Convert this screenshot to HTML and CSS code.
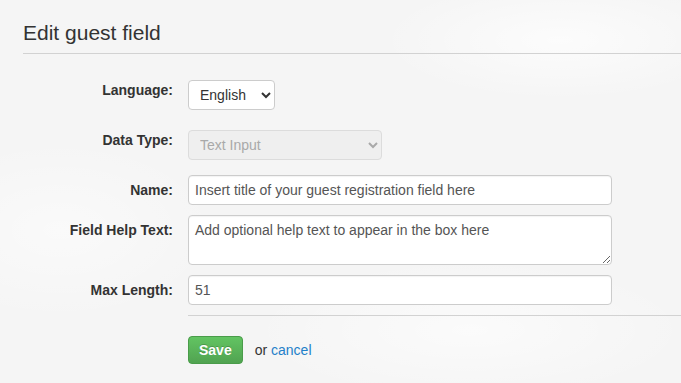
FILE: index.html
```html
<!DOCTYPE html>
<html lang="en">
<head>
    <meta charset="UTF-8">
    <meta name="viewport" content="width=device-width, initial-scale=1.0">
    <title>Edit guest field</title>
    <link rel="stylesheet" href="styles.css">
</head>
<body>

    <div id="page">
        <form id="fieldForm">
            <div class="legend">Edit guest field</div>

            <!-- FIELD ROWS -->
            <div class="row row-select row-wide">
                <label class="label" for="language">Language:</label>
                <div class="control">
                    <select id="language" class="language">
                        <option>English</option>
                    </select>
                </div>
            </div>

            <div class="row row-select row-mid">
                <label class="label" for="dataType">Data Type:</label>
                <div class="control">
                    <select id="dataType" class="data-type" disabled>
                        <option>Text Input</option>
                    </select>
                </div>
            </div>

            <div class="row">
                <label class="label" for="name">Name:</label>
                <div class="control">
                    <input type="text" id="name" class="text" value="Insert title of your guest registration field here">
                </div>
            </div>

            <div class="row">
                <label class="label" for="help">Field Help Text:</label>
                <div class="control">
                    <textarea id="help" class="text area">Add optional help text to appear in the box here</textarea>
                </div>
            </div>

            <div class="row">
                <label class="label" for="maxLength">Max Length:</label>
                <div class="control">
                    <input type="text" id="maxLength" class="text" value="51">
                </div>
            </div>

            <!-- ACTIONS -->
            <div class="actions">
                <button type="button" class="btn-save">Save</button>
                <span class="or">or <a href="#">cancel</a></span>
            </div>
        </form>
    </div>

</body>
</html>
```

FILE: styles.css
```css
* {
    box-sizing: border-box;
}

body {
    margin: 0;
    background-color: #f5f5f5;
    background-image:
        radial-gradient(ellipse 180px 60px at 560px 40px, rgba(255, 255, 255, 0.7), rgba(255, 255, 255, 0)),
        radial-gradient(ellipse 220px 70px at 470px 330px, rgba(255, 255, 255, 0.6), rgba(255, 255, 255, 0)),
        radial-gradient(ellipse 160px 90px at 60px 230px, rgba(255, 255, 255, 0.5), rgba(255, 255, 255, 0));
    font-family: "Liberation Sans", Arial, sans-serif;
    font-size: 14px;
    color: #333333;
    height: 383px;
    overflow: hidden;
}

#page {
    padding-left: 23px;
}

/* HEADER */
.legend {
    margin-top: 13px;
    margin-bottom: 26px;
    font-size: 21px;
    line-height: 40px;
    color: #333333;
    border-bottom: 1px solid #d2d2d2;
}

/* FIELD ROWS */
.row {
    display: grid;
    grid-template-columns: 151px 1fr;
    column-gap: 14px;
    margin-bottom: 10px;
}

.row-wide {
    margin-bottom: 20px;
}

.row-mid {
    margin-bottom: 15px;
}

.label {
    padding-top: 5px;
    padding-right: 1px;
    text-align: right;
    font-size: 14px;
    font-weight: bold;
    line-height: 20px;
    color: #333333;
}

.row-select .label {
    padding-top: 0;
}

.control {
    display: flex;
    align-items: flex-start;
}

select {
    height: 30px;
    padding: 0 4px 0 7px;
    border: 1px solid #cccccc;
    border-radius: 4px;
    background-color: #ffffff;
    font-family: "Liberation Sans", Arial, sans-serif;
    font-size: 14px;
    color: #333333;
}

.language {
    width: 87px;
}

.data-type {
    width: 194px;
}

.data-type:disabled {
    background-color: #efefef;
    border-color: #dcdcdc;
    color: #a9a9a9;
    opacity: 1;
}

.text {
    width: 424px;
    height: 30px;
    padding: 4px 6px;
    border: 1px solid #cccccc;
    border-radius: 4px;
    background-color: #ffffff;
    font-family: "Liberation Sans", Arial, sans-serif;
    font-size: 14px;
    line-height: 20px;
    color: #555555;
    box-shadow: inset 0 1px 1px rgba(0, 0, 0, 0.05);
}

.area {
    height: 50px;
    resize: vertical;
    display: block;
}

/* ACTIONS */
.actions {
    margin-left: 165px;
    border-top: 1px solid #d2d2d2;
    padding-top: 20px;
    display: flex;
    align-items: center;
    gap: 12px;
}

.btn-save {
    height: 28px;
    padding: 0 10px;
    border: 1px solid #4a9c4a;
    border-radius: 4px;
    background-color: #5bb75b;
    background-image: linear-gradient(to bottom, #62c462, #51a351);
    color: #ffffff;
    font-family: "Liberation Sans", Arial, sans-serif;
    font-size: 14px;
    font-weight: bold;
    text-shadow: 0 -1px 0 rgba(0, 0, 0, 0.2);
    cursor: pointer;
}

.or {
    font-size: 14px;
    color: #333333;
}

.or a {
    color: #1f80c9;
    text-decoration: none;
}
```
